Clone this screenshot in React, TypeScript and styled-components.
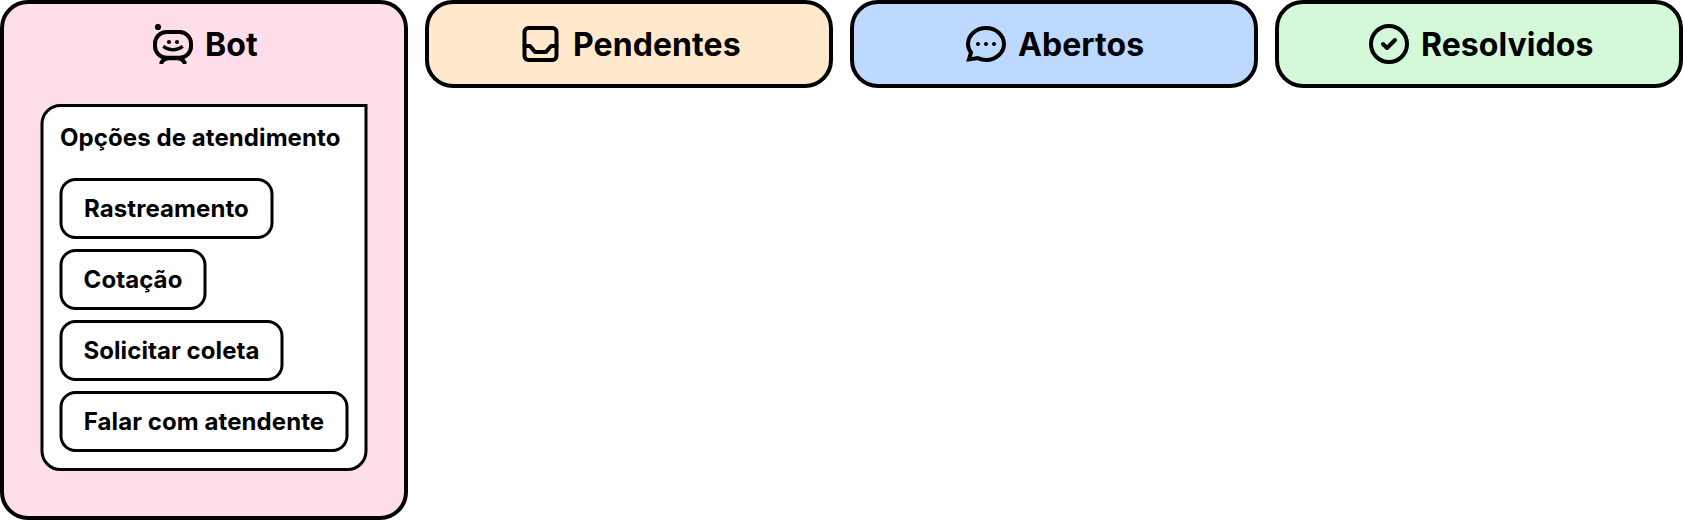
import React from "react";
import styled, { createGlobalStyle } from "styled-components";

const GlobalStyle = createGlobalStyle`
  *, *::before, *::after { box-sizing: border-box; }
  body {
    margin: 0;
    background: #fff;
    color: #000;
    font-family: Inter, "Liberation Sans", sans-serif;
  }
`;

const Board = styled.main`
  display: flex;
  align-items: flex-start;
  gap: 17px;
  width: 1683px;
`;

const Column = styled.section<{ $color: string; $height?: number }>`
  flex: 0 0 408px;
  height: ${({ $height }) => $height ?? 88}px;
  display: flex;
  flex-direction: column;
  align-items: center;
  gap: 40px;
  padding-top: 20px;
  border: 4px solid #000;
  border-radius: 28px;
  background: ${({ $color }) => $color};
`;

const ColumnHeader = styled.header<{ $inset: number }>`
  align-self: stretch;
  display: flex;
  align-items: center;
  gap: 12px;
  height: 40px;
  padding-left: ${({ $inset }) => $inset}px;
`;

const ColumnTitle = styled.h2`
  margin: 0;
  font-size: 32px;
  font-weight: 700;
  line-height: 39px;
  letter-spacing: 0.07px;
  white-space: nowrap;
`;

const Icon = styled.svg`
  width: 40px;
  height: 40px;
  flex: none;
  fill: none;
  stroke: #000;
  stroke-width: 4;
  stroke-linecap: round;
  stroke-linejoin: round;
`;

const Bubble = styled.div`
  display: flex;
  flex-direction: column;
  align-items: flex-start;
  width: 327px;
  margin-left: 1px;
  padding: 16px;
  border: 3px solid #000;
  border-radius: 20px 0 20px 20px;
  background: #fff;
  transform: translateX(-0.5px);
`;

const BubbleTitle = styled.h3`
  margin: 0 0 26px;
  padding-left: 0.5px;
  font-size: 24px;
  font-weight: 700;
  line-height: 29px;
  letter-spacing: 0.08px;
  white-space: nowrap;
`;

const Options = styled.div`
  display: flex;
  flex-direction: column;
  align-items: flex-start;
  gap: 10px;
`;

const OptionButton = styled.button<{ $width: number }>`
  width: ${({ $width }) => $width}px;
  height: 61px;
  padding: 0;
  border: 3px solid #000;
  border-radius: 16px;
  background: #fff;
  color: #000;
  font: 700 24px/29px Inter, "Liberation Sans", sans-serif;
  letter-spacing: 0.08px;
  white-space: nowrap;
`;

const BotIcon = () => (
  <Icon viewBox="0 0 40 40">
    <circle cx="5" cy="3" r="3.1" fill="#000" stroke="none" />
    <rect x="2" y="8" width="36" height="25.800" rx="11.5" />
    <circle cx="16" cy="18" r="2.1" fill="#000" stroke="none" />
    <circle cx="24" cy="18" r="2.1" fill="#000" stroke="none" />
    <path d="M10.200 22.400Q20 29.300 29.800 22.400" strokeWidth="3.2" strokeLinecap="butt" />
    <path d="M8 40Q9.500 35 15 34.300H25Q30.500 35 32 40" strokeLinecap="butt" />
  </Icon>
);

const InboxIcon = () => (
  <Icon viewBox="0.5 0 40 40">
    <rect x="4" y="4" width="32" height="32" rx="4" />
    <path d="M4 22H9.500L14.500 28H25.500L30.500 22H36" />
  </Icon>
);

const ChatIcon = () => (
  <Icon viewBox="0 0 40 40">
    <path
      d="M20 4C29.900 4 38 11.200 38 20S29.900 36 20 36C17 36 14.300 35.300 11.800 34.100L3 35.400L5 28.500C3.100 26 2 23.100 2 20C2 11.200 10.100 4 20 4Z"
      strokeLinejoin="miter"
    />
    <g fill="#000" stroke="none">
      <circle cx="12" cy="20" r="2" />
      <circle cx="20" cy="20" r="2" />
      <circle cx="28" cy="20" r="2" />
    </g>
  </Icon>
);

const CheckIcon = () => (
  <Icon viewBox="0 0 40 40">
    <circle cx="20" cy="20" r="18" />
    <path d="M14 20L18 24L26 16" />
  </Icon>
);

const options = [
  { label: "Rastreamento", width: 214 },
  { label: "Cotação", width: 147 },
  { label: "Solicitar coleta", width: 224 },
  { label: "Falar com atendente", width: 289 },
];

export default function App() {
  return (
    <>
      <GlobalStyle />
      <Board>
        <Column $color="#ffdeeb" $height={520}>
          <ColumnHeader $inset={149}>
            <BotIcon />
            <ColumnTitle>Bot</ColumnTitle>
          </ColumnHeader>
          <Bubble>
            <BubbleTitle>Opções de atendimento</BubbleTitle>
            <Options>
              {options.map(({ label, width }) => (
                <OptionButton key={label} $width={width}>
                  {label}
                </OptionButton>
              ))}
            </Options>
          </Bubble>
        </Column>
        <Column $color="#ffe8cc">
          <ColumnHeader $inset={92}>
            <InboxIcon />
            <ColumnTitle>Pendentes</ColumnTitle>
          </ColumnHeader>
        </Column>
        <Column $color="#bdd9ff">
          <ColumnHeader $inset={112}>
            <ChatIcon />
            <ColumnTitle>Abertos</ColumnTitle>
          </ColumnHeader>
        </Column>
        <Column $color="#d3f9d8">
          <ColumnHeader $inset={90}>
            <CheckIcon />
            <ColumnTitle>Resolvidos</ColumnTitle>
          </ColumnHeader>
        </Column>
      </Board>
    </>
  );
}
